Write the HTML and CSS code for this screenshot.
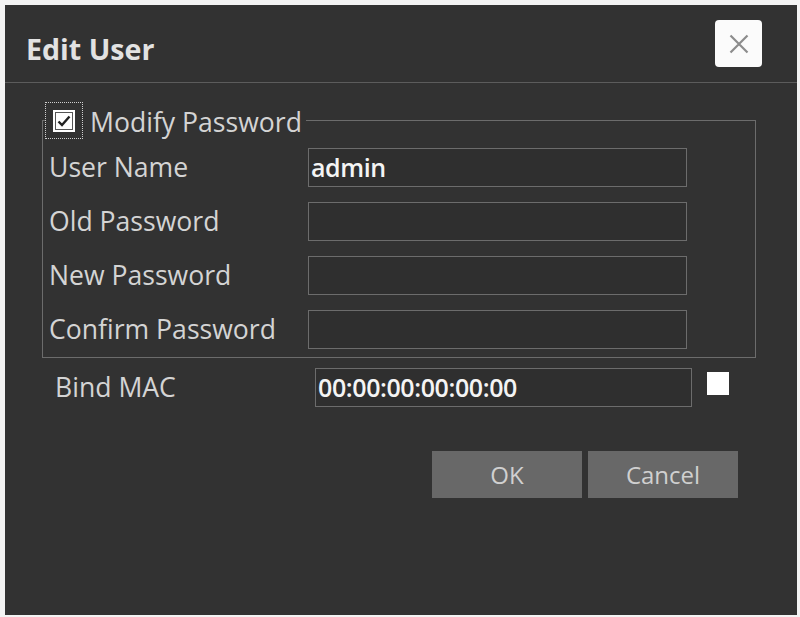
FILE: index.html
```html
<!DOCTYPE html>
<html lang="en">
<head>
<meta charset="utf-8">
<title>Edit User</title>
<link rel="stylesheet" href="styles.css">
</head>
<body>
<div class="dialog">
  <div class="header">
    <h1 class="title">Edit User</h1>
    <button class="close" type="button" aria-label="Close">
      <svg width="20" height="20" viewBox="0 0 20 20"><path d="M1.5 1.5 L18.5 18.5 M18.5 1.5 L1.5 18.5" stroke="#8c8c8c" stroke-width="2.2" fill="none"/></svg>
    </button>
  </div>
  <div class="body">
    <fieldset class="group">
      <legend class="legend">
        <span class="focus"><span class="check"><svg width="14" height="12" viewBox="0 0 14 12"><path d="M1.5 6.5 L5 10 L12.5 1.5" stroke="#222" stroke-width="2.4" fill="none"/></svg></span></span>
        <span class="legend-text">Modify Password</span>
      </legend>
      <div class="rows">
        <div class="row"><span class="label">User Name</span><div class="input">admin</div></div>
        <div class="row"><span class="label">Old Password</span><div class="input"></div></div>
        <div class="row"><span class="label">New Password</span><div class="input"></div></div>
        <div class="row"><span class="label">Confirm Password</span><div class="input"></div></div>
      </div>
    </fieldset>
    <div class="mac-row">
      <span class="label mac-label">Bind MAC</span>
      <div class="input mac-input">00:00:00:00:00:00</div>
      <span class="box"></span>
    </div>
    <div class="actions">
      <button class="btn" type="button">OK</button>
      <button class="btn" type="button">Cancel</button>
    </div>
  </div>
</div>
</body>
</html>
```
FILE: styles.css
```css
html, body {
  margin: 0;
  padding: 0;
  background: #f3f3f3;
}
body {
  font-family: "Open Sans", "Noto Sans", sans-serif;
}
.dialog {
  margin: 5px 0 0 5px;
  width: 792px;
  height: 610px;
  background: #323232;
  box-sizing: border-box;
}
.header {
  height: 78px;
  box-sizing: border-box;
  border-bottom: 1px solid #5c5c5c;
  display: flex;
  justify-content: space-between;
  align-items: flex-start;
  padding: 15px 35px 0 21px;
}
.title {
  margin: 15px 0 0 0;
  font-size: 28.6px;
  line-height: 28px;
  font-weight: 700;
  color: #e2e2e2;
}
.close {
  width: 47px;
  height: 47px;
  padding: 0;
  border: none;
  border-radius: 4px;
  background: #fbfbfb;
  display: flex;
  align-items: center;
  justify-content: center;
}
.body {
  padding: 19px 41px 0 37px;
}
.group {
  margin: 0;
  padding: 9px 0 8px 0;
  border: 1px solid #6c6c6c;
  min-inline-size: 0;
}
.legend {
  margin-left: 2px;
  padding: 0 4px 0 0;
  display: flex;
  align-items: center;
  gap: 7px;
}
.focus {
  width: 38px;
  height: 37px;
  box-sizing: border-box;
  border: 1px dotted #cfcfcf;
  display: flex;
  align-items: center;
  justify-content: center;
}
.check {
  width: 22px;
  height: 22px;
  box-sizing: border-box;
  background: #fff;
  border: 2px solid #fff;
  box-shadow: inset 0 0 0 1px #555;
  display: flex;
  align-items: center;
  justify-content: center;
}
.legend-text {
  font-size: 26.6px;
  line-height: 37px;
  color: #d4d4d4;
  position: relative;
  top: 2px;
}
.rows {
  display: flex;
  flex-direction: column;
  gap: 15px;
  padding-left: 6px;
}
.row {
  display: grid;
  grid-template-columns: 259px 379px;
  align-items: center;
}
.label {
  font-size: 26.6px;
  line-height: 39px;
  color: #d4d4d4;
  white-space: nowrap;
}
.input {
  height: 39px;
  box-sizing: border-box;
  border: 1px solid #6c6c6c;
  background: #2f2f2f;
  color: #f4f4f4;
  font-size: 25px;
  font-weight: 600;
  letter-spacing: -0.4px;
  line-height: 37px;
  padding-left: 2px;
}
.mac-row {
  display: flex;
  align-items: center;
  margin: 10px 0 0 13px;
}
.mac-label {
  width: 260px;
}
.mac-input {
  width: 377px;
  padding-left: 2px;
}
.box {
  width: 22px;
  height: 23px;
  background: #fff;
  margin: -8px 0 0 15px;
}
.actions {
  display: flex;
  justify-content: flex-end;
  gap: 6px;
  margin: 44px 18px 0 0;
}
.btn {
  width: 150px;
  height: 47px;
  border: none;
  border-radius: 0;
  background: #686868;
  color: #d0d0d0;
  font-family: "Open Sans", "Noto Sans", sans-serif;
  font-size: 24px;
  padding: 0;
}
```
